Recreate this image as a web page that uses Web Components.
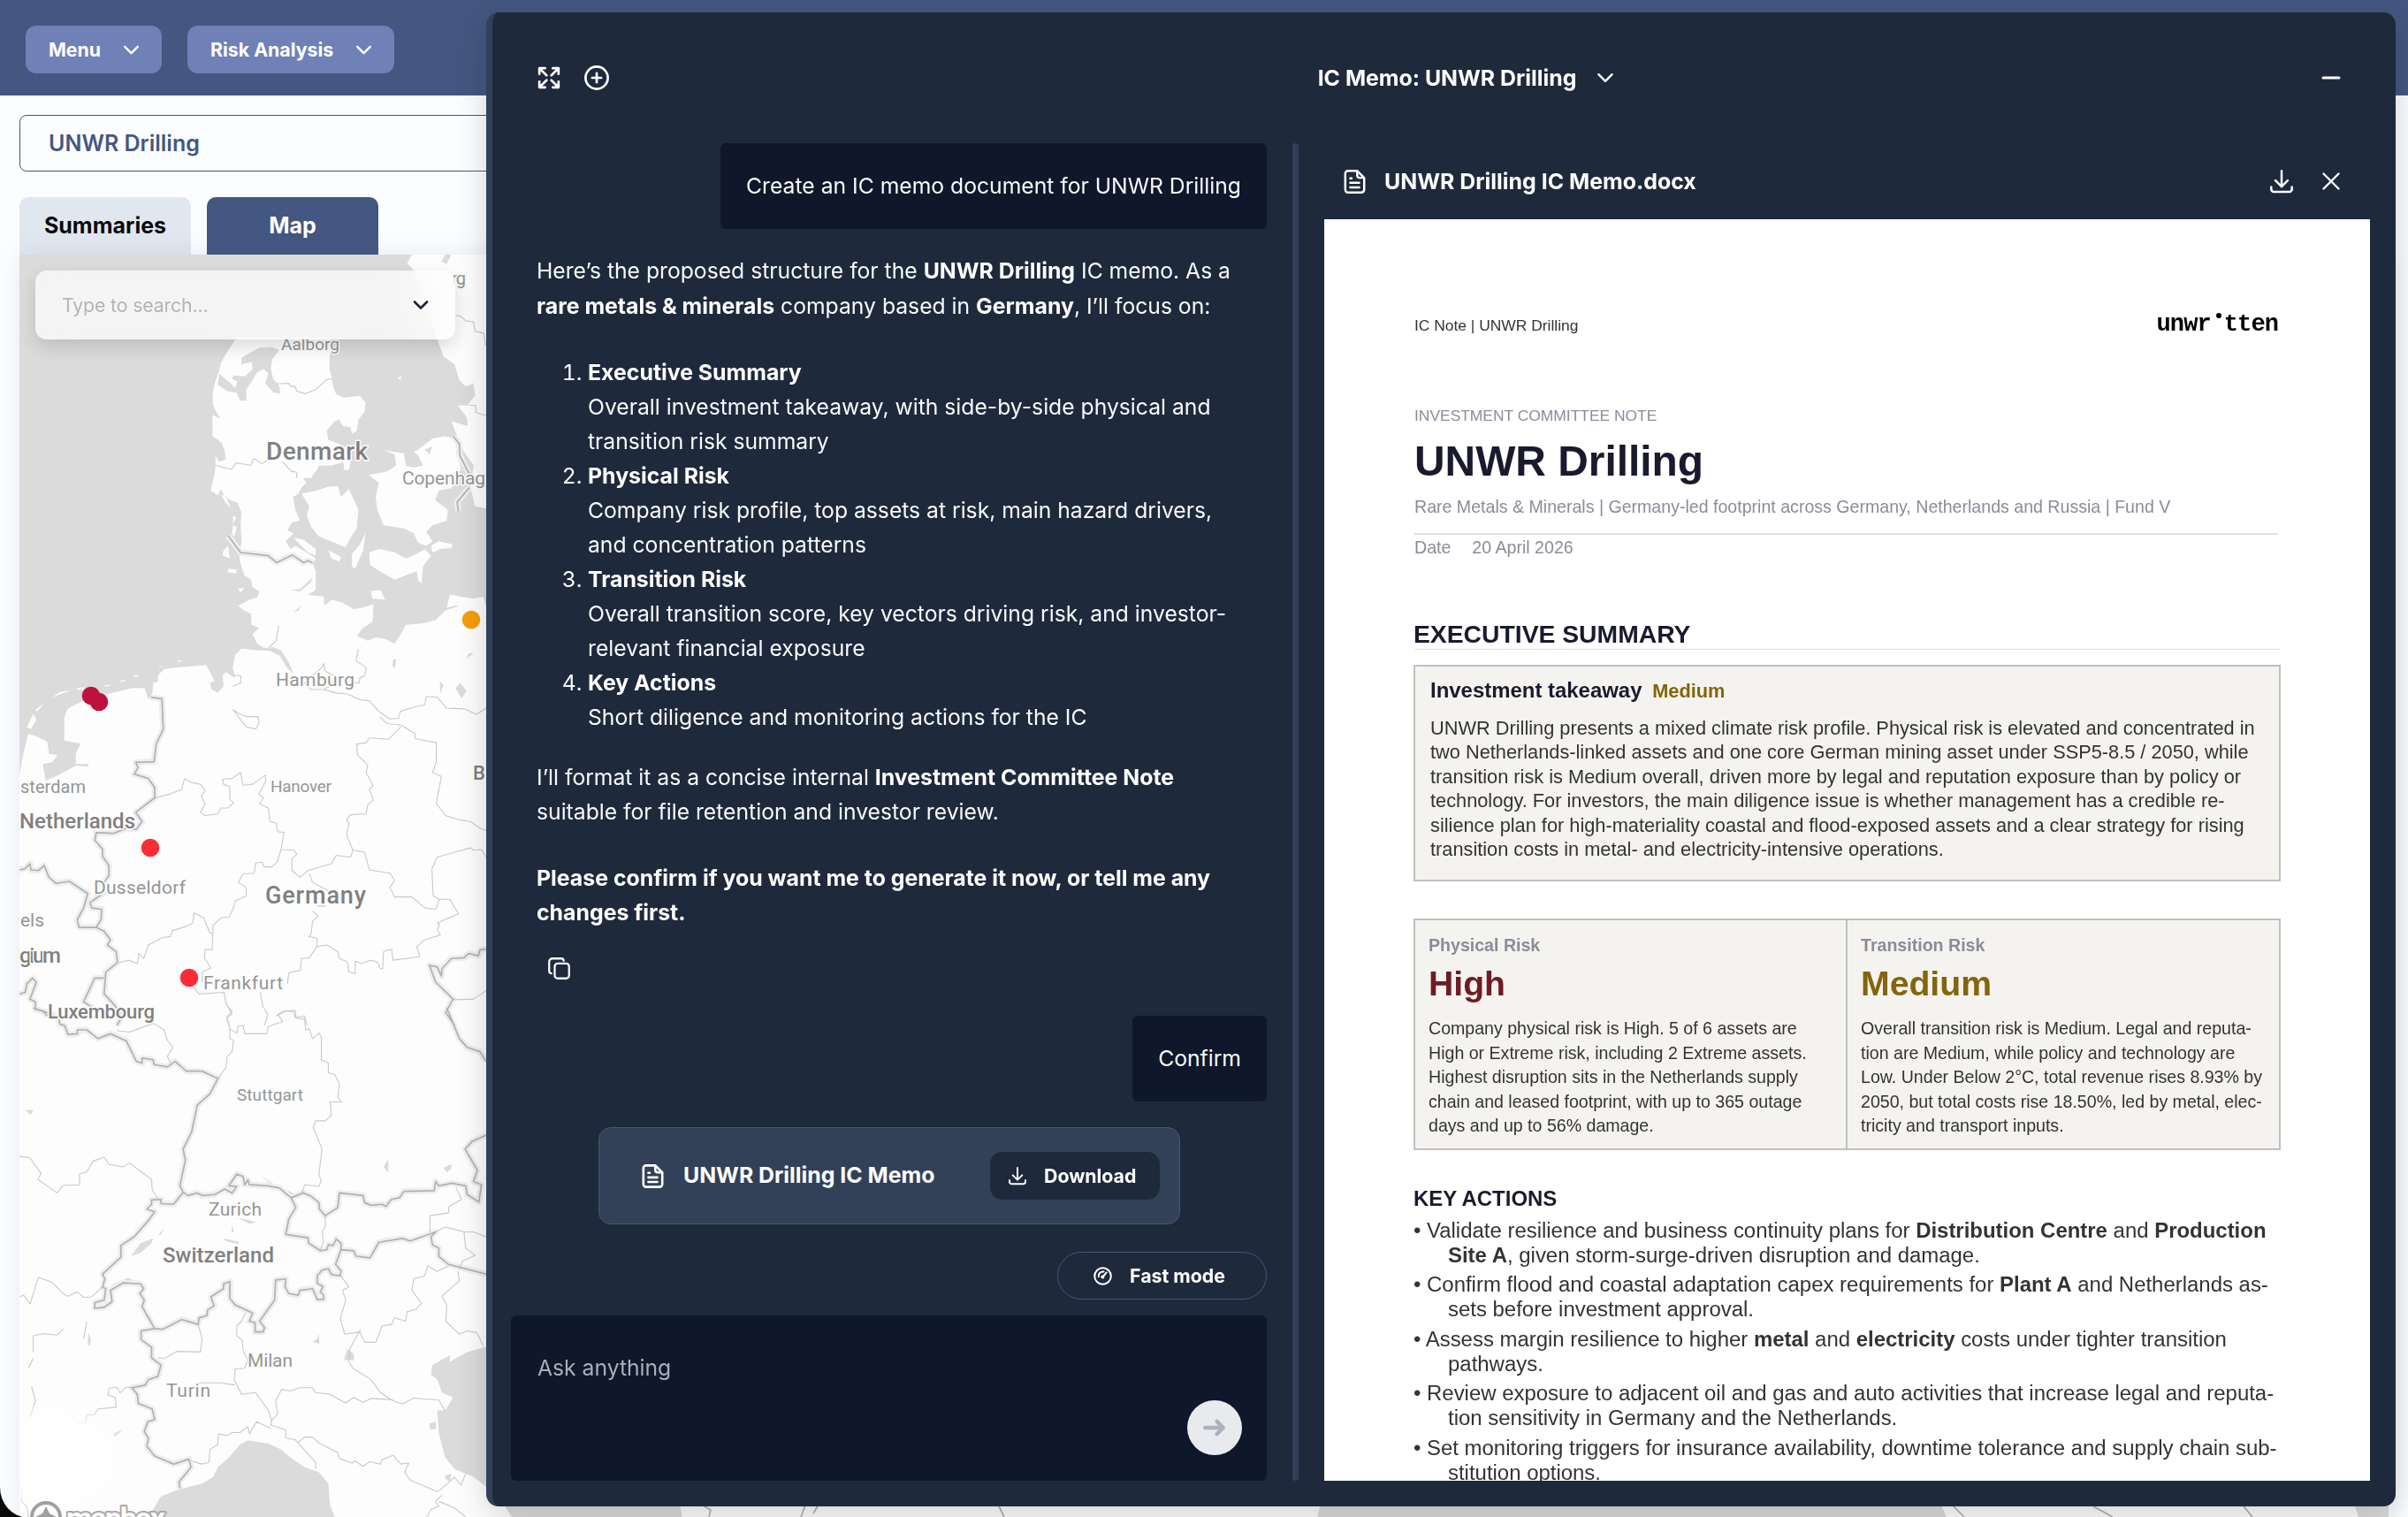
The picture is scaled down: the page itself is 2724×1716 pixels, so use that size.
<!DOCTYPE html>
<html lang="en">
<head>
<meta charset="utf-8">
<title>Risk Analysis</title>
<style>
    html, body {
        margin: 0;
        background: #0b0b0c;
    }

    body {
        width: 2724px;
        height: 1716px;
        overflow: hidden;
        font-family: Inter, "Liberation Sans", sans-serif;
    }
</style>
</head>
<body>
<risk-app>
    <nav-button slot="nav">Menu</nav-button>
    <nav-button slot="nav">Risk Analysis</nav-button>
    <span slot="company">UNWR Drilling</span>
    <tab-item slot="tabs">Summaries</tab-item>
    <tab-item slot="tabs" active>Map</tab-item>
    <risk-map slot="map"></risk-map>
    <assistant-panel slot="panel">
        <span slot="title">IC Memo: UNWR Drilling</span>
        <chat-thread slot="chat"></chat-thread>
        <doc-viewer slot="document">
            <span slot="filename">UNWR Drilling IC Memo.docx</span>
            <memo-page></memo-page>
        </doc-viewer>
    </assistant-panel>
</risk-app>

<script>
const ICONS = {
    chevron: '<path d="M5 8.5l7 7 7-7"/>',
    expand: '<path d="M2 8V2h6M2 2l7.5 7.5M22 8V2h-6M22 2l-7.5 7.5M2 16v6h6M2 22l7.5-7.5M22 16v6h-6M22 22l-7.5-7.5"/>',
    plus: '<circle cx="12" cy="12" r="10.8"/><path d="M12 7.6v8.8M7.6 12h8.8"/>',
    minus: '<path d="M3 12h18"/>',
    close: '<path d="M3.5 3.5l17 17M20.5 3.5l-17 17"/>',
    download: '<path d="M12 1.2v16M5.6 11.2l6.4 6.4 6.4-6.4M1.2 18v2.2a2.8 2.8 0 0 0 2.8 2.8h16a2.8 2.8 0 0 0 2.8-2.8V18"/>',
    file: '<path d="M14.5 1.2H5.2A2.7 2.7 0 0 0 2.5 3.9v16.2a2.7 2.7 0 0 0 2.7 2.7h13.6a2.7 2.7 0 0 0 2.7-2.7V8.2z"/><path d="M14.5 1.4v4.4a2.3 2.3 0 0 0 2.3 2.3h4.4M7.5 8.6h1.4M7.5 13.2h9M7.5 17.8h9"/>',
    copy: '<rect x="7.2" y="6.6" width="15.6" height="16.2" rx="3.2"/><path d="M3.6 17.4A2.8 2.8 0 0 1 1.2 14.6V4.8a3.6 3.6 0 0 1 3.6-3.6h9.4a2.8 2.8 0 0 1 2.8 2.4"/>',
    gauge: '<circle cx="12" cy="12" r="10.6"/><path d="M6.6 12.6a5.6 5.6 0 0 1 6.6-6.2M16.8 7.4l-4.2 5"/><circle cx="11.8" cy="13.2" r="1.2"/>',
    arrow: '<path d="M2 12h19M14.4 5.4L21 12l-6.6 6.6"/>'
};

class AppIcon extends HTMLElement {
    constructor() {
        super();
        this.attachShadow({ mode: 'open' });
    }

    connectedCallback() {
        const size = this.getAttribute('size') || 24;
        const stroke = this.getAttribute('stroke') || 2.3;
        this.shadowRoot.innerHTML = `
            <style>
                :host {
                    display: block;
                    flex: none;
                    width: ${size}px;
                    height: ${size}px;
                }

                svg {
                    display: block;
                    overflow: visible;
                    fill: none;
                    stroke: currentColor;
                    stroke-linecap: round;
                    stroke-linejoin: round;
                }
            </style>
            <svg width="${size}" height="${size}" viewBox="0 0 24 24" stroke-width="${stroke}">${ICONS[this.getAttribute('name')]}</svg>
        `;
    }
}

class NavButton extends HTMLElement {
    constructor() {
        super();
        this.attachShadow({ mode: 'open' });
        this.shadowRoot.innerHTML = `
            <style>
                :host {
                    display: flex;
                    align-items: center;
                    gap: 22px;
                    box-sizing: border-box;
                    height: 54px;
                    padding: 0 22px 0 26px;
                    border-radius: 12px;
                    background: #6f81b7;
                    color: #fff;
                    font-size: 21.3px;
                    font-weight: 700;
                    line-height: 52px;
                    white-space: nowrap;
                }
            </style>
            <slot></slot>
            <app-icon name="chevron" size="25" stroke="2.3"></app-icon>
        `;
    }
}

class TabItem extends HTMLElement {
    constructor() {
        super();
        this.attachShadow({ mode: 'open' });
        this.shadowRoot.innerHTML = `
            <style>
                :host {
                    display: flex;
                    align-items: center;
                    justify-content: center;
                    box-sizing: border-box;
                    width: 194px;
                    height: 65px;
                    padding-bottom: 1px;
                    border-radius: 10px 10px 0 0;
                    background: #e1e7ef;
                    color: #0a0a0a;
                    font-size: 25px;
                    font-weight: 700;
                }

                :host([active]) {
                    background: #445780;
                    color: #fff;
                }
            </style>
            <slot></slot>
        `;
    }
}

class RiskApp extends HTMLElement {
    constructor() {
        super();
        this.attachShadow({ mode: 'open' });
        this.shadowRoot.innerHTML = `
            <style>
                :host {
                    display: flex;
                    flex-direction: column;
                    position: relative;
                    width: 2724px;
                    height: 1716px;
                    overflow: hidden;
                    background: #fcfdff;
                    border-bottom-left-radius: 30px 34px;
                }

                header {
                    display: flex;
                    flex: none;
                    gap: 29px;
                    box-sizing: border-box;
                    height: 108px;
                    padding: 29px;
                    background: #445780;
                }

                .company {
                    display: flex;
                    flex: none;
                    align-items: center;
                    box-sizing: border-box;
                    height: 64px;
                    margin: 22px 22px 0;
                    padding: 0 0 1px 32px;
                    border: 1px solid #445780;
                    border-radius: 8px;
                    color: #445780;
                    font-size: 25px;
                    font-weight: 600;
                }

                .tabs {
                    display: flex;
                    flex: none;
                    gap: 18px;
                    margin: 29px 22px 0;
                }

                .map {
                    flex: 1;
                    min-height: 0;
                    margin: 0 22px;
                    box-shadow: 0 0 26px rgba(80, 110, 170, 0.13);
                }
            </style>
            <header><slot name="nav"></slot></header>
            <div class="company"><slot name="company"></slot></div>
            <div class="tabs"><slot name="tabs"></slot></div>
            <div class="map"><slot name="map"></slot></div>
            <slot name="panel"></slot>
        `;
    }
}

class RiskMap extends HTMLElement {
    constructor() {
        super();
        this.attachShadow({ mode: 'open' });
        const north = 'translate(0 280) scale(.35714)';
        const middle = 'translate(0 560) scale(.35714 .38265)';
        const south = 'translate(0 1140) scale(.35714 .36735)';

        const borders = [
            [north, 'M723 913L762 966L850 976L876 998L926 974L962 998L975 992L990 998'],
            [north, 'M1436 598L1455 622L1457 660L1485 715M1485 762L1448 806L1452 836'],
            [middle, 'M478 598L513 602L517 692L495 735L488 788L430 790L437 806L425 825L470 838L490 865L490 895L430 938L450 965L432 988L400 985L360 1000L305 998L300 1020L325 1047L325 1068L345 1095L345 1125L330 1145L330 1175L285 1205L290 1220L322 1225L320 1255L305 1278L250 1278L245 1255L265 1220L278 1178L220 1142L178 1148L155 1130L140 1095L122 1110L98 1108L95 1090L78 1105L62 1108'],
            [middle, 'M305 1278L330 1290L350 1315L340 1330L368 1350L372 1382L335 1410L330 1475L365 1510L385 1545L370 1568M330 1428L300 1428L265 1498L300 1520M62 1475L80 1470L85 1445L103 1428L115 1440L95 1490L112 1498L112 1520L135 1525L150 1540'],
            [middle, 'M1540 1342L1520 1345L1515 1362L1485 1355L1470 1368L1430 1370L1400 1400L1398 1422L1385 1395L1360 1390L1380 1440L1435 1490L1412 1530L1440 1568'],
            [south, 'M105 0L150 15L185 30L190 50L205 55L215 82L245 80L245 68L275 68L310 95L350 80L400 102L432 165L450 170L450 155L485 160L488 175L530 182L555 165L590 195L640 195L690 218L665 265L625 300L607 382L580 435L587 470L570 548L580 568L550 605L510 603L510 590L480 592L480 605L465 620L490 628L470 655L425 705L383 732L383 768L325 820L332 835L325 860L335 865L330 900L300 908L300 925L330 922L355 905L350 870L390 847L445 850L455 865L443 880L457 900L450 920L490 988L515 990L575 960L628 975L630 955L655 948L658 930L678 918L668 890L708 865L708 850L728 843L728 895L745 915L800 940L790 965L808 970L808 998L833 998L838 985L822 965L870 900L873 838L905 835L903 860L915 880L945 885L950 870L990 865L1005 898L1025 898L1025 885L1015 875L1023 858L1005 848L1005 825L1020 808L1040 803L1050 822L1078 825L1080 810L1063 790L1080 745L1080 725L1065 712L1055 732L1040 730L1035 745L1015 748L978 725L975 708L905 698L915 650L937 615L922 585L885 555L850 548L790 545L785 530L775 545L770 520L750 512L725 548L750 550L735 570L712 558L680 575L640 578L625 570L595 578L580 568'],
            [south, 'M922 585L960 570L985 580L1010 600L1012 620L1030 640L1070 615L1075 570L1150 578L1155 600L1175 608L1210 605L1222 612L1240 590L1265 585L1280 565L1375 563L1380 535L1390 548L1430 540L1475 548L1480 575L1517 598L1525 545L1500 535L1512 500L1473 435L1495 412L1540 392'],
            [south, 'M1080 745L1120 748L1128 765L1172 770L1200 722L1275 710L1300 718L1380 690L1365 705L1370 730L1390 740L1390 765L1420 790L1540 820M1415 0L1455 95L1480 122L1520 135L1540 165'],
            [south, 'M490 988L447 995L447 1022L480 1045L480 1078L510 1100L500 1135L470 1145L460 1162L418 1170L435 1190L438 1218L482 1235L490 1268L468 1275L457 1305L470 1325L465 1350L490 1380L550 1405L598 1390L605 1415L567 1460L570 1480']
        ];

        const regions = [
            [north, 'M685 690L732 703L748 682L795 690L803 668L830 685L845 675M895 678L922 708L940 712L940 730M875 432L915 430L920 440L935 440L940 455L967 463L1000 450L1035 418L1050 416M1443 215L1460 218L1475 232L1500 235L1505 265L1533 272L1538 310M1485 500L1507 500L1507 522L1540 532'],
            [middle, 'M883 385L875 430L850 452M1135 455L1128 490L1160 510L1155 535L1140 540L1138 555L1120 555M740 532L763 535L763 555L738 566M950 540L975 545L1020 510L1025 498L1030 520L1060 535L1055 560L1025 575L985 575L960 550M1025 575L1065 585L1100 588L1140 605L1170 608L1200 640L1235 662L1262 660L1268 640L1300 630L1345 620L1350 596L1385 598L1415 630L1470 632L1510 648L1540 630M738 635L765 650L785 655L818 655L820 675L810 692L780 685ZM1203 655L1225 675L1270 680L1315 705L1315 720L1382 732L1382 790L1370 820L1398 832L1382 912L1412 948L1455 960L1490 965L1520 985L1540 992'],
            [middle, 'M1270 685L1230 722L1170 718L1160 732L1130 736L1132 768L1165 798L1160 820L1182 860L1170 870L1182 902L1165 915L1160 942L1110 945L1098 960L1105 970L1098 1005L1118 1050L1155 1056L1170 1108L1235 1118L1250 1140L1235 1160L1250 1188L1305 1188L1345 1220L1380 1225L1392 1195L1372 1185L1368 1105L1385 1070L1490 1043L1500 1050L1525 1048L1540 1070M490 895L535 885L575 870L585 838L605 850L635 855L650 875L637 890L650 912L635 938L650 948L690 942L700 925L722 925L740 910L728 900L728 862L708 855L705 840L735 838L762 820L770 858L800 855L840 828L842 845L820 885L835 895L822 912L850 925L855 965L875 970L880 995L900 998L890 1048L932 1050L940 1062L925 1075L925 1110L950 1130L975 1110L1050 1090L1065 1065L1110 1070L1118 1050'],
            [middle, 'M890 1048L878 1085L860 1100L835 1098L830 1085L810 1088L805 1118L770 1120L755 1145L780 1160L780 1185L745 1200L740 1220L725 1248L700 1250L675 1272L672 1345L650 1342L648 1368L668 1398L640 1410L640 1440M980 1120L990 1145L1040 1170M1005 1215L1030 1215M990 1230L1008 1245L990 1260L985 1300L978 1305L1005 1310L1003 1335L1035 1330L1070 1350L1075 1370L1100 1380L1105 1410L1125 1415L1125 1378L1145 1385L1172 1375L1195 1380L1205 1400L1212 1400L1215 1350L1240 1342L1245 1375L1330 1365L1320 1335L1345 1315L1395 1300L1385 1285L1392 1270L1385 1265L1452 1238L1425 1195L1392 1195M378 1382L410 1375L435 1385L440 1355L455 1370L470 1330L515 1308L540 1305L545 1288L590 1275L610 1265L615 1235L645 1250L665 1295L672 1295M1003 1335L980 1368L955 1370L952 1405L915 1412L910 1445M610 1450L630 1475L710 1470L715 1500L735 1535L718 1545L725 1568M825 1470L832 1510L848 1535L838 1568M875 1540L905 1525L930 1528L935 1545L965 1540L972 1568M1435 1492L1500 1490L1540 1465'],
            [south, 'M725 0L735 10L718 30L728 60L728 95L740 100L735 135L720 150L715 185L690 218M728 65L750 78L755 55L770 55L775 80L845 80L850 58L895 42L880 20L900 10L935 8L938 32L965 35L968 68L980 65L990 95L1010 78L1018 90L1018 160L1040 170L1040 200L1060 205L1075 235L1070 275L1082 290L1045 290L1050 330L1030 348L1000 348L992 368L1020 435L1010 515L1018 530L1010 550L965 545L955 575M370 70L410 75L485 48L520 68L530 100L548 122L530 150L540 170M62 457L95 462L130 510L120 528L180 570L200 547L252 545L252 512L275 505L295 472L330 460L345 482L390 490L410 478L480 528L482 560L500 588M62 890L75 885L95 912L122 830L165 845L200 880L215 888L245 875L265 892L290 890L325 860M1030 640L1030 675L1020 690L1025 720L1015 745M1445 555L1462 590L1422 612L1420 632L1362 640L1362 690M1380 690L1410 675L1470 690L1500 690L1540 705M1470 690L1475 740L1505 762L1465 780L1455 805'],
            [south, 'M628 975L640 1020L635 1060L560 1058L520 1080L500 1078M778 940L765 965L750 980L750 1010L768 1025L770 1055L785 1085L775 1110L745 1112L742 1145L765 1190L810 1185L850 1240L860 1270L858 1285L905 1300L905 1325L935 1330L1000 1400L1000 1420M630 1155L700 1155L745 1162M1080 825L1105 860L1085 870L1095 900L1078 958L1092 1005L1140 998L1155 1030L1190 1030L1210 980L1240 975L1250 955L1285 965L1290 935L1315 930L1335 910L1305 870L1310 835L1345 825L1355 795L1385 812L1420 795M1450 810L1455 840L1400 888L1415 915L1412 965L1455 1005L1480 995L1510 1000L1530 1040M1142 990L1108 1050L1105 1090L1118 1110L1175 1145L1205 1185L1245 1210L1275 1220L1310 1202L1390 1208L1410 1242M860 1270L880 1250L873 1210L892 1175L920 1180L950 1170L990 1170L1000 1185L1045 1190L1095 1217L1120 1200L1150 1215L1175 1203L1245 1207M418 1170L400 1168L380 1185L370 1168L345 1172L342 1192L365 1200L368 1230L310 1235L300 1252L275 1255L270 1278L245 1278M605 1395L640 1405L662 1400L665 1360L690 1345L692 1312L720 1318L735 1308L760 1308L785 1290L790 1312L812 1275L858 1295M942 1340L965 1322L990 1322L1010 1340L1070 1370L1075 1388L1115 1402L1125 1395L1150 1412L1170 1398L1205 1405L1210 1392L1245 1378L1270 1405L1295 1402L1282 1430L1300 1455L1385 1490L1400 1480L1440 1445L1460 1470L1475 1435M1400 1500L1380 1520L1390 1535L1365 1545L1352 1568M1390 1520L1440 1540L1475 1568M62 1475L70 1480L68 1520L85 1535L90 1568M105 1060L105 1010L140 1003L180 1008L200 990M90 1110L105 1080M95 1260L112 1210L100 1165M275 965L265 1020']
        ];

        const water = [
            [north, 'M780 340L820 318L860 315L885 325L862 355L858 385L865 415L885 440L888 462L868 460L840 430L850 400L835 385L815 395L800 420L780 450L780 485L760 485L750 460L720 455L690 435L695 400L730 430L745 445L752 425L735 415L740 405L775 408L800 385L797 362L765 370L765 350Z'],
            [north, 'M1280 655L1305 645L1322 655L1340 690L1310 697L1285 690ZM1345 640L1370 630L1360 655ZM1455 620L1485 680L1490 730L1462 700L1445 650Z'],
            [north, 'M1500 1285L1475 1305L1485 1285ZM1245 1305L1255 1305L1250 1332L1243 1325ZM1393 1375L1405 1385L1395 1412ZM1458 1380L1478 1405L1462 1428L1443 1395ZM930 1155L955 1132L945 1150Z'],
            [north, 'M860 1265L890 1275L918 1320L930 1350L912 1335L885 1292L850 1275ZM920 1085L950 1082L990 1045L985 1060L950 1090Z'],
            [middle, 'M62 700L203 690L203 725L255 735L240 765L240 795L280 795L280 803L240 800L185 828L145 845L135 795L165 790L182 768L155 765L150 730L120 715L90 705L75 760L62 825Z'],
            [south, 'M470 1568L510 1505L560 1485L640 1465L675 1445L690 1415L725 1385L760 1345L785 1332L850 1342L890 1360L920 1385L965 1415L1010 1430L1040 1465L1045 1530L1060 1568Z'],
            [south, 'M1560 1038L1480 1060L1425 1090L1425 1070L1370 1100L1365 1130L1385 1145L1400 1185L1435 1200L1410 1240L1385 1240L1390 1310L1410 1385L1440 1420L1500 1445L1560 1490Z'],
            [south, 'M415 765L445 725L485 710L480 725L445 755ZM500 700L520 680L510 698ZM750 645L812 660L790 665ZM1215 490L1230 465L1230 508ZM1405 492L1430 482L1430 495L1415 507ZM1100 1050L1120 1065L1122 1085L1090 1085ZM1360 1280L1380 1275L1382 1298L1362 1298ZM1410 1440L1430 1435L1425 1460L1410 1450ZM80 315L105 315L98 330ZM350 855L405 832L465 855L450 862L400 846ZM820 512L870 545L940 575L915 585L870 552ZM280 1000L288 1025L285 1042L278 1035ZM1010 1003L1012 1035L990 1028L1005 1020ZM360 1310L388 1300L362 1322ZM735 670L742 690L733 690ZM705 710L755 720L755 728L715 718Z']
        ];

        const islands = [
            'M955 780L1000 770L1040 758L1070 755L1080 790L1105 765L1122 800L1135 830L1130 890L1110 920L1095 950L1060 935L1010 915L985 885L972 850L980 820Z',
            'M1168 720L1225 710L1255 690L1250 655L1215 642L1300 655L1325 640L1370 605L1410 598L1440 605L1450 650L1460 700L1445 735L1430 762L1390 770L1378 800L1418 830L1415 865L1370 880L1350 900L1370 930L1350 945L1325 935L1310 905L1280 890L1215 880L1195 830L1190 790L1200 745Z',
            'M1170 965L1200 955L1250 965L1285 985L1320 970L1345 955L1365 975L1340 1010L1335 1065L1325 1055L1320 1025L1250 1052L1210 1030L1172 1005Z',
            'M1365 945L1390 930L1433 940L1430 952L1395 955L1370 967Z',
            'M1158 905L1150 960L1125 1018L1115 1010L1115 970L1140 940Z',
            'M1040 958L1080 980L1075 995L1050 985Z',
            'M930 920L960 925L1000 955L1000 975L975 965Z',
            'M1175 1088L1205 1085L1220 1115L1180 1112Z',
            'M1425 1100L1500 1112L1530 1105L1540 1140L1440 1135L1415 1140Z',
            'M1258 412L1272 408L1268 418Z',
            'M700 780L720 795L730 825L712 805ZM738 850L748 855L738 878ZM738 880L750 885L742 918L735 905ZM708 960L722 945L728 985L705 975ZM722 1018L750 1020L748 1032L722 1030ZM755 1080L775 1078L762 1092Z',
            'M85 1520L105 1478L115 1495L98 1525Z',
            'M80 1568L90 1545L120 1555L150 1568Z',
            'M165 1425L190 1408L225 1402L190 1415ZM245 1395L265 1393L268 1400L245 1402ZM325 1388L355 1384L340 1391ZM380 1372L405 1368L385 1377ZM420 1357L442 1353L430 1361ZM500 1328L520 1327L508 1331ZM560 1308L580 1310L565 1313Z',
            'M112 1465L140 1442L118 1470Z'
        ];

        // text, x, baseline, width, size, kind
        const labels = [
            ['rg', 511, 322, 16, 20, 'city'],
            ['Aalborg', 318, 396, 66, 19, 'city'],
            ['Denmark', 301, 520, 115, 28, 'country'],
            ['Copenhag', 455, 548, 94, 21, 'city'],
            ['Hamburg', 312, 776, 89, 21, 'city'],
            ['Hanover', 306, 896, 69, 19, 'city'],
            ['B', 535, 882, 14, 22, 'country'],
            ['sterdam', 23, 897, 74, 20, 'city'],
            ['Netherlands', 22, 937, 131, 24, 'country'],
            ['Dusseldorf', 106, 1011, 104, 21, 'city'],
            ['Germany', 300, 1022, 114, 27, 'country'],
            ['els', 23, 1048, 27, 21, 'city'],
            ['gium', 22, 1089, 47, 24, 'country'],
            ['Frankfurt', 230, 1119, 90, 21, 'city'],
            ['Luxembourg', 54, 1152, 121, 22, 'country'],
            ['Stuttgart', 268, 1245, 75, 19, 'city'],
            ['Zurich', 236, 1375, 60, 21, 'city'],
            ['Switzerland', 184, 1428, 126, 24, 'country'],
            ['Milan', 280, 1546, 51, 21, 'city'],
            ['Turin', 188, 1580, 50, 21, 'city']
        ];

        const pins = [
            [533, 701, '#f59e0b'],
            [103, 787, '#be123c'],
            [112, 794, '#be123c'],
            [170, 959, '#fb2c36'],
            [214, 1106, '#fb2c36']
        ];

        const draw = (list, cls) => list.map(([t, d]) => `<path class="${cls}" transform="${t}" d="${d}"/>`).join('');

        this.shadowRoot.innerHTML = `
            <style>
                :host {
                    display: block;
                    position: relative;
                    height: 1428px;
                    overflow: hidden;
                }

                .chart {
                    display: block;
                }

                path {
                    vector-effect: non-scaling-stroke;
                    stroke-linejoin: round;
                }

                .sea { fill: #dbdbdb; }
                .land { fill: #fdfdfd; }
                .halo { fill: none; stroke: #eeeeee; stroke-width: 7; }
                .border { fill: none; stroke: #b1b1b1; stroke-width: 1.7; }
                .region { fill: none; stroke: #c9c9c9; stroke-width: 1.1; }

                text {
                    font-family: Roboto, "Liberation Sans", sans-serif;
                    fill: #959595;
                    stroke: #fdfdfd;
                    stroke-width: 3px;
                    paint-order: stroke;
                    stroke-linejoin: round;
                }

                .country {
                    fill: #808080;
                    font-weight: 500;
                }

                .brand {
                    fill: #fff;
                    stroke: #a9a9a9;
                    stroke-width: 4px;
                    font-weight: 700;
                }

                .search {
                    position: absolute;
                    top: 18px;
                    left: 18px;
                    display: flex;
                    align-items: center;
                    justify-content: space-between;
                    box-sizing: border-box;
                    width: 475px;
                    height: 78px;
                    padding: 0 27px 0 30px;
                    border-radius: 13px;
                    background: rgba(255, 255, 255, 0.7);
                    backdrop-filter: blur(22px);
                    box-shadow: 0 8px 20px rgba(0, 0, 0, 0.14);
                    color: #1f2430;
                }

                .search span {
                    color: #b1b5bb;
                    font-size: 21.3px;
                    letter-spacing: -0.15px;
                }
            </style>
            <svg class="chart" width="2680" height="1428" viewBox="22 288 2680 1428">
                <defs>
                    <radialGradient id="haze">
                        <stop offset="0" stop-color="#fff"/>
                        <stop offset=".6" stop-color="#fff" stop-opacity=".9"/>
                        <stop offset="1" stop-color="#fff" stop-opacity="0"/>
                    </radialGradient>
                </defs>
                <rect class="land" x="22" y="288" width="2680" height="1428"/>
                <rect class="sea" x="22" y="288" width="530" height="541"/>
                <path class="land" transform="${north}" d="M750 285L720 330L700 365L693 395L680 430L673 465L675 500L685 520L698 542L673 530L673 598L690 608L703 620L712 645L715 670L695 680L682 660L683 690L680 715L672 750L668 770L690 785L700 765L710 785L730 800L752 808L765 840L762 880L765 930L760 965L758 985L765 1010L775 1040L795 1050L800 1075L822 1090L815 1108L790 1115L755 1135L770 1148L795 1160L797 1195L820 1205L800 1225L815 1255L835 1267L860 1270L870 1278L800 1275L765 1270L745 1290L737 1330L745 1365L725 1350L715 1345L705 1355L708 1390L690 1410L670 1400L665 1380L680 1372L665 1345L653 1322L620 1325L560 1330L520 1335L500 1355L500 1375L485 1380L482 1420L470 1430L458 1395L420 1395L350 1412L300 1425L255 1440L215 1460L203 1490L205 1568L1560 1568L1560 1140L1520 1125L1500 1135L1470 1130L1440 1140L1410 1150L1380 1180L1340 1190L1285 1195L1275 1215L1250 1255L1220 1240L1190 1235L1165 1245L1130 1230L1150 1205L1180 1185L1183 1130L1150 1140L1120 1145L1085 1125L1050 1115L1028 1135L1025 1105L975 1100L1000 1085L1000 1025L990 1000L1000 985L985 975L960 960L935 945L920 955L905 930L930 905L910 895L925 870L950 865L935 830L928 790L945 780L955 760L970 745L960 730L985 730L1003 705L1010 690L1050 690L1088 680L1090 705L1105 705L1110 680L1110 640L1070 620L1040 610L1035 580L1060 550L1075 545L1085 565L1110 570L1115 590L1130 580L1135 545L1155 520L1158 490L1140 470L1090 475L1065 465L1055 440L1050 410L1043 380L1045 340L1050 285Z"/>
                <path class="land" transform="${north}" d="M1305 22L1290 50L1310 72L1340 160L1385 291L1405 345L1440 370L1455 420L1475 440L1500 430L1505 470L1480 500L1450 500L1480 540L1480 565L1430 550L1445 590L1465 640L1500 690L1490 760L1505 820L1560 830L1560 22Z"/>
                <path class="sea" transform="${north}" d="M1410 22L1430 22L1415 52L1398 45Z"/>
                ${islands.map(d => `<path class="land" transform="${north}" d="${d}"/>`).join('')}
                ${draw(water, 'sea')}
                <path class="sea" d="M556 1680L620 1690L768 1700L772 1716H579ZM1497 1690H2190L2202 1716H1490ZM2660 1690H2702V1716H2668Z"/>
                ${draw(borders, 'halo')}
                ${draw(regions, 'region')}
                ${draw(borders, 'border')}
                <path class="border" d="M790 1700L804 1708L802 1716M912 1700L906 1716M926 1702L920 1712M1128 1700L1136 1716M2206 1700L2222 1716M2368 1704L2390 1716M2535 1700L2548 1716"/>
                <ellipse cx="62" cy="1650" rx="86" ry="70" fill="url(#haze)"/>
                ${labels.map(([t, x, y, w, s, k]) => `<text class="${k}" x="${x}" y="${y}" textLength="${w}" font-size="${s}">${t}</text>`).join('')}
                <circle cx="52" cy="1716" r="16" fill="#fdfdfd" stroke="#a0a0a0" stroke-width="4"/>
                <path d="M52 1704l4 8 8 4h-24l8-4z" fill="#a0a0a0"/>
                <text class="brand" x="75" y="1729" textLength="112" font-size="34">mapbox</text>
                ${pins.map(([x, y, c]) => `<circle cx="${x}" cy="${y}" r="10.3" fill="${c}"/>`).join('')}
            </svg>
            <div class="search">
                <span>Type to search...</span>
                <app-icon name="chevron" size="24" stroke="2.6"></app-icon>
            </div>
        `;
    }
}

class AssistantPanel extends HTMLElement {
    constructor() {
        super();
        this.attachShadow({ mode: 'open' });
        this.shadowRoot.innerHTML = `
            <style>
                :host {
                    display: flex;
                    flex-direction: column;
                    position: absolute;
                    top: 14px;
                    left: 550px;
                    box-sizing: border-box;
                    width: 2160px;
                    height: 1690px;
                    border-left: 7px solid #304059;
                    border-radius: 14px;
                    background: #1e293b;
                    box-shadow: 0 10px 36px rgba(0, 0, 0, 0.17);
                    color: #fff;
                }

                header {
                    display: grid;
                    grid-template-columns: 1fr auto 1fr;
                    align-items: center;
                    height: 148px;
                    padding: 0 61px 0 51px;
                }

                .left {
                    display: flex;
                    align-items: center;
                    gap: 27px;
                }

                .title {
                    display: flex;
                    align-items: center;
                    gap: 20px;
                    margin-left: 63px;
                    font-size: 24.85px;
                    font-weight: 700;
                }

                .right {
                    justify-self: end;
                }

                .body {
                    display: grid;
                    grid-template-columns: 855px 7px 1183px;
                    column-gap: 29px;
                    height: 1513px;
                    padding-left: 21px;
                }

                .divider {
                    border-radius: 4px;
                    background: #304059;
                }

                ::slotted([slot="chat"]),
                ::slotted([slot="document"]) {
                    min-height: 0;
                }
            </style>
            <header>
                <div class="left">
                    <app-icon name="expand" size="26" stroke="2.5"></app-icon>
                    <app-icon name="plus" size="28" stroke="2.3"></app-icon>
                </div>
                <div class="title">
                    <slot name="title"></slot>
                    <app-icon name="chevron" size="26" stroke="2.2"></app-icon>
                </div>
                <app-icon class="right" name="minus" size="24" stroke="3"></app-icon>
            </header>
            <div class="body">
                <slot name="chat"></slot>
                <div class="divider"></div>
                <slot name="document"></slot>
            </div>
        `;
    }
}

class ChatBubble extends HTMLElement {
    constructor() {
        super();
        this.attachShadow({ mode: 'open' });
        this.shadowRoot.innerHTML = `
            <style>
                :host {
                    display: flex;
                    flex: none;
                    align-items: center;
                    align-self: flex-end;
                    height: 97px;
                    padding: 0 29px;
                    border-radius: 6px;
                    background: #0f172a;
                    white-space: nowrap;
                }
            </style>
            <slot></slot>
        `;
    }
}

class ChatThread extends HTMLElement {
    constructor() {
        super();
        this.attachShadow({ mode: 'open' });
        this.shadowRoot.innerHTML = `
            <style>
                :host {
                    display: flex;
                    flex-direction: column;
                    color: #f8fafc;
                    font-size: 24.7px;
                    line-height: 39px;
                }

                p, ol {
                    flex: none;
                    margin: 0 0 0 29px;
                    white-space: nowrap;
                }

                b {
                    color: #fff;
                    font-size: 24.85px;
                    font-weight: 700;
                    line-height: 1;
                }

                .intro {
                    margin-top: 27px;
                    line-height: 40px;
                }

                ol {
                    margin-top: 36px;
                    padding-left: 58px;
                }

                .format { margin-top: 29px; }
                .confirm { margin-top: 36px; }

                .copy {
                    margin: 31px 0 41px 42px;
                }

                .file {
                    display: flex;
                    flex: none;
                    align-items: center;
                    box-sizing: border-box;
                    width: 658px;
                    height: 110px;
                    margin: 29px 0 0 99px;
                    padding: 0 22px 0 47px;
                    border: 1.5px solid #46577a;
                    border-radius: 14px;
                    background: #324158;
                    color: #fff;
                    font-size: 24.85px;
                    font-weight: 700;
                    white-space: nowrap;
                }

                .file .name {
                    flex: 1;
                    padding: 0 0 1px 21px;
                }

                button {
                    display: flex;
                    flex: none;
                    align-items: center;
                    box-sizing: border-box;
                    height: 54px;
                    margin: 0;
                    border: 0;
                    color: #fff;
                    font: 700 21.3px Inter, sans-serif;
                }

                .download {
                    gap: 20px;
                    width: 192px;
                    padding: 0 0 0 21px;
                    border-radius: 14px;
                    background: #1e293b;
                }

                .mode {
                    gap: 20px;
                    align-self: flex-end;
                    width: 237px;
                    margin-top: 31px;
                    padding: 0 0 0 40px;
                    border: 1.5px solid #46557a;
                    border-radius: 27px;
                    background: none;
                }

                .ask {
                    display: flex;
                    flex: 1;
                    align-items: flex-end;
                    justify-content: space-between;
                    margin-top: 18px;
                    padding: 0 28px 29px 30px;
                    border-radius: 6px;
                    background: #0f172a;
                    color: #a9aeb9;
                }

                .ask span {
                    align-self: flex-start;
                    margin-top: 40px;
                }

                .send {
                    justify-content: center;
                    width: 62px;
                    height: 62px;
                    padding: 0;
                    border-radius: 50%;
                    background: #e8eaee;
                    color: #abb2bc;
                }
            </style>
            <chat-bubble>Create an IC memo document for UNWR Drilling</chat-bubble>
            <p class="intro">Here’s the proposed structure for the <b>UNWR Drilling</b> IC memo. As a<br><b>rare metals &amp; minerals</b> company based in <b>Germany</b>, I’ll focus on:</p>
            <ol>
                <li><b>Executive Summary</b><br>Overall investment takeaway, with side-by-side physical and<br>transition risk summary</li>
                <li><b>Physical Risk</b><br>Company risk profile, top assets at risk, main hazard drivers,<br>and concentration patterns</li>
                <li><b>Transition Risk</b><br>Overall transition score, key vectors driving risk, and investor-<br>relevant financial exposure</li>
                <li><b>Key Actions</b><br>Short diligence and monitoring actions for the IC</li>
            </ol>
            <p class="format">I’ll format it as a concise internal <b>Investment Committee Note</b><br>suitable for file retention and investor review.</p>
            <p class="confirm"><b>Please confirm if you want me to generate it now, or tell me any<br>changes first.</b></p>
            <app-icon class="copy" name="copy" size="25" stroke="2.2"></app-icon>
            <chat-bubble>Confirm</chat-bubble>
            <div class="file">
                <app-icon name="file" size="27" stroke="2.3"></app-icon>
                <span class="name">UNWR Drilling IC Memo</span>
                <button class="download"><app-icon name="download" size="20" stroke="2.3"></app-icon>Download</button>
            </div>
            <button class="mode"><app-icon name="gauge" size="21" stroke="2.3"></app-icon>Fast mode</button>
            <div class="ask">
                <span>Ask anything</span>
                <button class="send"><app-icon name="arrow" size="26" stroke="4"></app-icon></button>
            </div>
        `;
    }
}

class DocViewer extends HTMLElement {
    constructor() {
        super();
        this.attachShadow({ mode: 'open' });
        this.shadowRoot.innerHTML = `
            <style>
                :host {
                    display: flex;
                    flex-direction: column;
                    overflow: hidden;
                }

                header {
                    display: flex;
                    flex: none;
                    align-items: center;
                    height: 86px;
                    padding: 0 32px 0 21px;
                    font-size: 24.9px;
                    font-weight: 700;
                }

                .name {
                    flex: 1;
                    padding-left: 20px;
                }

                .download {
                    margin-right: 31px;
                }

                .page {
                    flex: 1;
                    min-height: 0;
                    overflow: hidden;
                    background: #fff;
                }
            </style>
            <header>
                <app-icon name="file" size="27" stroke="2.2"></app-icon>
                <div class="name"><slot name="filename"></slot></div>
                <app-icon class="download" name="download" size="26" stroke="2.3"></app-icon>
                <app-icon name="close" size="24" stroke="2.4"></app-icon>
            </header>
            <div class="page"><slot></slot></div>
        `;
    }
}

class MemoPage extends HTMLElement {
    constructor() {
        super();
        this.attachShadow({ mode: 'open' });
        this.shadowRoot.innerHTML = `
            <style>
                :host {
                    --pt: 2.177px;
                    display: block;
                    width: 980px;
                    padding: 110px 0 0 102px;
                    color: #333;
                    font-family: "Liberation Sans", Arial, sans-serif;
                    white-space: nowrap;
                }

                h1, h2, h3, p, ul {
                    margin: 0;
                }

                h1, h2, h3 {
                    color: #1a1a2e;
                }

                .running {
                    display: flex;
                    justify-content: space-between;
                    height: 20px;
                    padding-right: 3px;
                    font-size: calc(8 * var(--pt));
                    line-height: 20px;
                }

                .logo {
                    display: flex;
                    color: #000;
                    font: 700 27px/18px "Liberation Mono", monospace;
                    letter-spacing: -0.9px;
                }

                .dot {
                    width: 6px;
                    height: 6px;
                    margin: -4px 3px 0 6px;
                    border-radius: 50%;
                    background: #000;
                }

                .kicker {
                    margin-top: 82px;
                    color: #8b8b9b;
                    font-size: calc(8 * var(--pt));
                    line-height: 20px;
                }

                h1 {
                    margin: 14px 0 11px;
                    font-size: calc(22 * var(--pt));
                    line-height: 56px;
                }

                .sub {
                    margin-right: 3px;
                    padding-bottom: 18px;
                    border-bottom: 2px solid #dedfe2;
                    color: #8b8b9b;
                    font-size: calc(9 * var(--pt));
                    line-height: 24px;
                }

                .date {
                    display: flex;
                    gap: 24px;
                    margin-top: 2px;
                    color: #8b8b9b;
                    font-size: calc(9 * var(--pt));
                    line-height: 24px;
                }

                h2 {
                    margin-top: 70px;
                    padding-bottom: 1px;
                    border-bottom: 1px solid #dedfe2;
                    font-size: calc(13 * var(--pt));
                    line-height: 32px;
                    text-indent: -1px;
                }

                .takeaway {
                    box-sizing: border-box;
                    height: 245px;
                    margin: 17px 0 0 -1px;
                    padding: 13px 17px;
                    border: 2px solid #c0c0c0;
                    background: #f5f3ef;
                    font-size: calc(10 * var(--pt));
                    line-height: 27.4px;
                }

                h3 {
                    font-size: calc(11 * var(--pt));
                    line-height: 28px;
                }

                h3 em {
                    padding-left: 5px;
                    font-size: calc(10 * var(--pt));
                    font-style: normal;
                }

                .takeaway p {
                    margin-top: 14px;
                }

                .medium { color: #84650c; }
                .high { color: #701b24; }

                .risks {
                    display: grid;
                    grid-template-columns: 487px 1fr;
                    box-sizing: border-box;
                    height: 262px;
                    margin: 42px 0 0 -1px;
                    border: 2px solid #c0c0c0;
                    background: #f5f3ef;
                    font-size: calc(9 * var(--pt));
                    line-height: 27.5px;
                }

                .risks > div {
                    padding: 16px 15px 0;
                }

                .risks > div + div {
                    border-left: 2px solid #c0c0c0;
                }

                .label {
                    color: #8b8b9b;
                    font-weight: 700;
                    line-height: 24px;
                }

                .grade {
                    margin: 9px 0 14px;
                    font-size: calc(18 * var(--pt));
                    font-weight: 700;
                    line-height: 46px;
                }

                .actions {
                    margin: 41px 0 0 -1px;
                }

                ul {
                    margin: 8px 0 0 -1px;
                    padding: 0;
                    list-style: none;
                    font-size: calc(11 * var(--pt));
                    line-height: 27.6px;
                }

                li {
                    margin-bottom: 6.3px;
                    padding-left: 39px;
                    text-indent: -39px;
                }
            </style>
            <div class="running">
                <span>IC Note | UNWR Drilling</span>
                <span class="logo">unwr<i class="dot"></i>tten</span>
            </div>
            <div class="kicker">INVESTMENT COMMITTEE NOTE</div>
            <h1>UNWR Drilling</h1>
            <p class="sub">Rare Metals &amp; Minerals | Germany-led footprint across Germany, Netherlands and Russia | Fund V</p>
            <div class="date"><span>Date</span><span>20 April 2026</span></div>
            <h2>EXECUTIVE SUMMARY</h2>
            <section class="takeaway">
                <h3>Investment takeaway <em class="medium">Medium</em></h3>
                <p>UNWR Drilling presents a mixed climate risk profile. Physical risk is elevated and concentrated in<br>two Netherlands-linked assets and one core German mining asset under SSP5-8.5 / 2050, while<br>transition risk is Medium overall, driven more by legal and reputation exposure than by policy or<br>technology. For investors, the main diligence issue is whether management has a credible re-<br>silience plan for high-materiality coastal and flood-exposed assets and a clear strategy for rising<br>transition costs in metal- and electricity-intensive operations.</p>
            </section>
            <section class="risks">
                <div>
                    <div class="label">Physical Risk</div>
                    <div class="grade high">High</div>
                    <p>Company physical risk is High. 5 of 6 assets are<br>High or Extreme risk, including 2 Extreme assets.<br>Highest disruption sits in the Netherlands supply<br>chain and leased footprint, with up to 365 outage<br>days and up to 56% damage.</p>
                </div>
                <div>
                    <div class="label">Transition Risk</div>
                    <div class="grade medium">Medium</div>
                    <p>Overall transition risk is Medium. Legal and reputa-<br>tion are Medium, while policy and technology are<br>Low. Under Below 2°C, total revenue rises 8.93% by<br>2050, but total costs rise 18.50%, led by metal, elec-<br>tricity and transport inputs.</p>
                </div>
            </section>
            <h3 class="actions">KEY ACTIONS</h3>
            <ul>
                <li>• Validate resilience and business continuity plans for <b>Distribution Centre</b> and <b>Production<br>Site A</b>, given storm-surge-driven disruption and damage.</li>
                <li>• Confirm flood and coastal adaptation capex requirements for <b>Plant A</b> and Netherlands as-<br>sets before investment approval.</li>
                <li>• Assess margin resilience to higher <b>metal</b> and <b>electricity</b> costs under tighter transition<br>pathways.</li>
                <li>• Review exposure to adjacent oil and gas and auto activities that increase legal and reputa-<br>tion sensitivity in Germany and the Netherlands.</li>
                <li>• Set monitoring triggers for insurance availability, downtime tolerance and supply chain sub-<br>stitution options.</li>
            </ul>
        `;
    }
}

customElements.define('app-icon', AppIcon);
customElements.define('nav-button', NavButton);
customElements.define('tab-item', TabItem);
customElements.define('risk-app', RiskApp);
customElements.define('risk-map', RiskMap);
customElements.define('assistant-panel', AssistantPanel);
customElements.define('chat-bubble', ChatBubble);
customElements.define('chat-thread', ChatThread);
customElements.define('doc-viewer', DocViewer);
customElements.define('memo-page', MemoPage);
</script>
</body>
</html>
